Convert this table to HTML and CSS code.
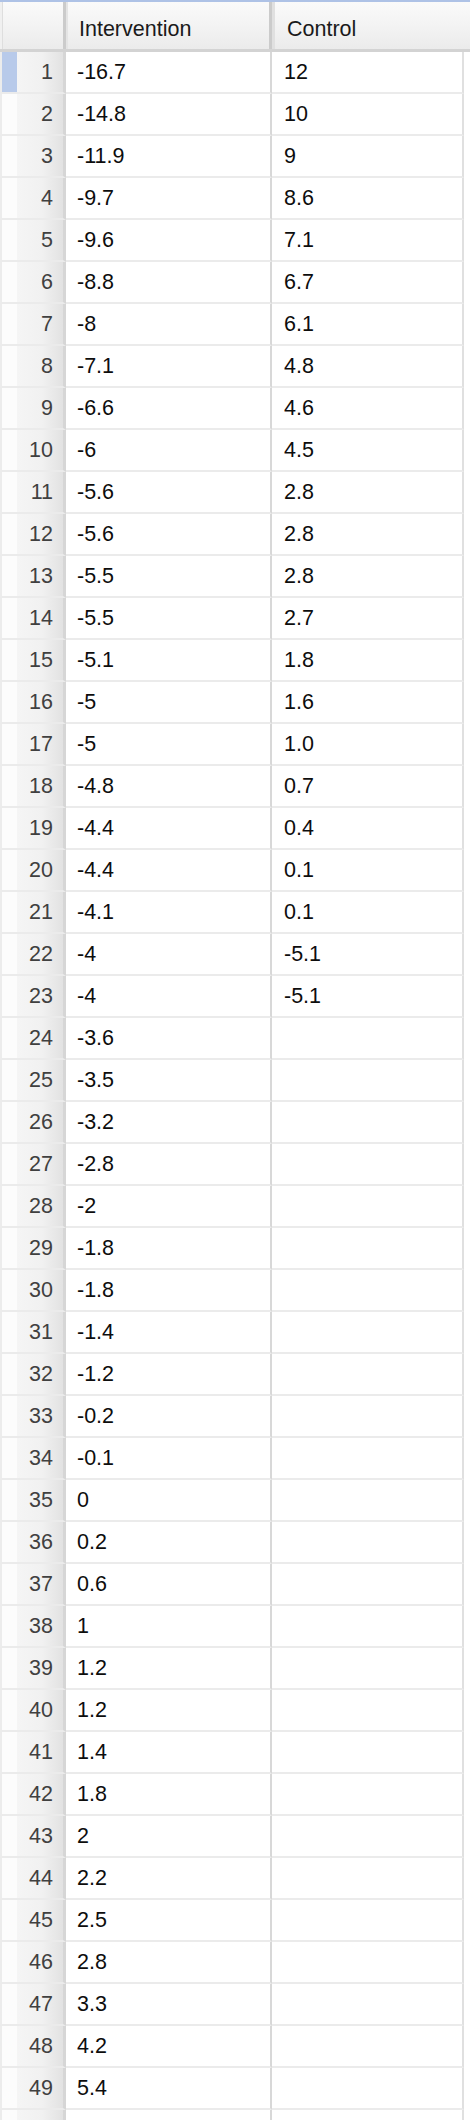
FILE: index.html
```html
<!DOCTYPE html>
<html>
<head>
<meta charset="utf-8">
<link rel="stylesheet" href="styles.css">
</head>
<body>
<div class="sheet">
  <div class="head">
    <div class="hcell hnum"></div>
    <div class="hcell hc1">Intervention</div>
    <div class="hcell hc2">Control</div>
  </div>
  <div id="rows"></div>
</div>
<script src="app.js"></script>
</body>
</html>
```
FILE: styles.css
```css
html, body {
  margin: 0;
  padding: 0;
  background: #ffffff;
}
.sheet {
  width: 470px;
  font-family: "Liberation Sans", Arial, sans-serif;
  font-size: 21.5px;
  line-height: 25px;
}
.head {
  display: flex;
  height: 47px;
  border-top: 2px solid #aec2e6;
  border-bottom: 3px solid #d3d3d3;
  background: linear-gradient(#fafafa, #f3f3f3 50%, #ebebeb);
}
.hcell {
  box-sizing: border-box;
  height: 47px;
  padding-top: 15px;
  color: #1a1a1a;
}
.hnum {
  width: 66px;
  border-left: 2px solid #f0f0f0;
  box-shadow: inset 1px 0 0 #dedede;
  border-right: 3px solid #cbcbcb;
}
.hc1 {
  width: 206px;
  padding-left: 11px;
  border-left: 2px solid #e4e4e4;
  border-right: 3px solid #cbcbcb;
}
.hc2 {
  flex: 1;
  padding-left: 12px;
  border-left: 3px solid #e0e0e0;
}
.row {
  display: flex;
  height: 42px;
}
.cell {
  box-sizing: border-box;
  height: 42px;
  border-bottom: 2px solid #ebebeb;
  display: flex;
  align-items: center;
  padding-top: 1px;
  color: #0d0d0d;
}
.num {
  width: 66px;
  justify-content: flex-end;
  padding-right: 10px;
  color: #404040;
  border-left: 2px solid #ececec;
  border-right: 3px solid #d6d6d6;
  background: linear-gradient(to right, #fcfcfc 0, #fcfcfc 15px, #f5f5f5 15px, #f1f1f1 65%, #e2e2e2 100%);
}
.num.sel {
  background: linear-gradient(to right, #b8caea 0, #b8caea 15px, transparent 15px),
              linear-gradient(to right, #fcfcfc 0, #fcfcfc 15px, #f5f5f5 15px, #f1f1f1 65%, #e2e2e2 100%);
}
.c1 {
  width: 206px;
  padding-left: 11px;
  border-right: 2px solid #d8d8d8;
}
.c2 {
  width: 192px;
  padding-left: 12px;
  border-right: 2px solid #e0e0e0;
}
```
FILE: app.js
```javascript
var data = [
  ["-16.7","12"],["-14.8","10"],["-11.9","9"],["-9.7","8.6"],["-9.6","7.1"],
  ["-8.8","6.7"],["-8","6.1"],["-7.1","4.8"],["-6.6","4.6"],["-6","4.5"],
  ["-5.6","2.8"],["-5.6","2.8"],["-5.5","2.8"],["-5.5","2.7"],["-5.1","1.8"],
  ["-5","1.6"],["-5","1.0"],["-4.8","0.7"],["-4.4","0.4"],["-4.4","0.1"],
  ["-4.1","0.1"],["-4","-5.1"],["-4","-5.1"],["-3.6",""],["-3.5",""],
  ["-3.2",""],["-2.8",""],["-2",""],["-1.8",""],["-1.8",""],
  ["-1.4",""],["-1.2",""],["-0.2",""],["-0.1",""],["0",""],
  ["0.2",""],["0.6",""],["1",""],["1.2",""],["1.2",""],
  ["1.4",""],["1.8",""],["2",""],["2.2",""],["2.5",""],
  ["2.8",""],["3.3",""],["4.2",""],["5.4",""],["",""]
];
var rows = document.getElementById("rows");
data.forEach(function (d, i) {
  var r = document.createElement("div");
  r.className = "row";
  var n = document.createElement("div");
  n.className = "cell num" + (i === 0 ? " sel" : "");
  n.textContent = i < 49 ? String(i + 1) : "";
  var a = document.createElement("div");
  a.className = "cell c1";
  a.textContent = d[0];
  var b = document.createElement("div");
  b.className = "cell c2";
  b.textContent = d[1];
  r.appendChild(n); r.appendChild(a); r.appendChild(b);
  rows.appendChild(r);
});
```
